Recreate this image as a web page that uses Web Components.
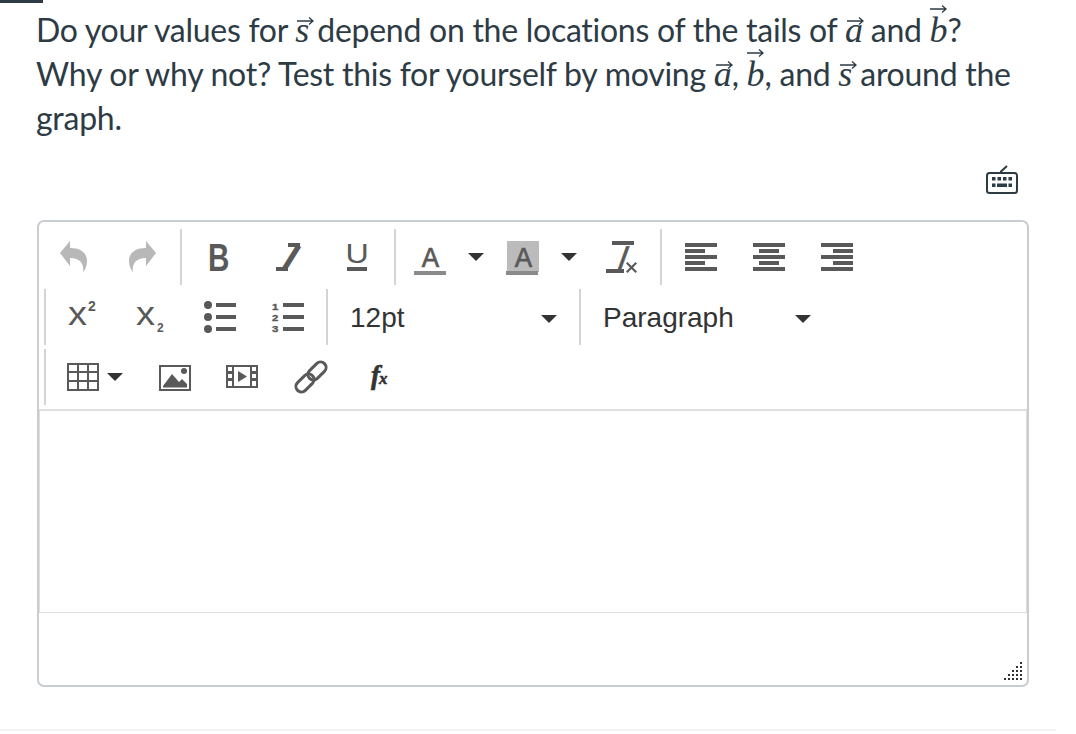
<!DOCTYPE html>
<html><head><meta charset="utf-8">
<style>
html,body{margin:0;padding:0;background:#fff}
body{width:1076px;height:734px;overflow:hidden;font-family:Lato,sans-serif;color:#2d3b45}
</style></head><body>
<quiz-page>
<question-text>
Do your values for <m-vec>s</m-vec> depend on the locations of the tails of <m-vec>a</m-vec> and <m-vec tall>b</m-vec>?<br>
Why or why not? Test this for yourself by moving <m-vec>a</m-vec>, <m-vec tall>b</m-vec>, and <m-vec>s</m-vec> around the<br>
graph.
</question-text>
<rich-editor></rich-editor>
</quiz-page>
<script>
function def(name,css,html){
  customElements.define(name,class extends HTMLElement{
    connectedCallback(){
      if(this.shadowRoot)return;
      const r=this.attachShadow({mode:'open'});
      r.innerHTML='<style>'+css+'</style>'+(typeof html==='function'?html(this):html);
    }
  });
}
def('quiz-page',`:host{display:block;width:1076px;height:734px}
.top{width:43px;height:3px;background:#2d3b45}
.wrap{padding:5px 0 0 37px;width:992px}
.foot{height:2px;width:1056px;background:#f3f3f3;margin-top:42px}`,
`<div class="top"></div><div class="wrap"><slot></slot></div><div class="foot"></div>`);
def('question-text',`:host{display:block;font:32px/44px Lato,sans-serif;letter-spacing:-.27px;color:#2d3b45;white-space:nowrap;height:140px;margin-left:-1px}`,`<slot></slot>`);
def('m-vec',`:host{display:inline-block;position:relative;font:italic 36px/1 "Liberation Serif",serif;letter-spacing:0;color:#2d3b45}
svg{position:absolute;left:2px;top:4px;width:17px;height:10px}
:host([tall]) svg{top:-8px;left:0}`,
`<slot></slot><svg viewBox="0 0 17 10" fill="none" stroke="#2d3b45" stroke-width="1.3"><path d="M0 5H16M12 1.500L16 5L12 8.500"/></svg>`);

def('tb-sep',`:host{display:block;width:2px;height:56px;background:#d4d4d4;flex:none}`,``);
def('tb-gap',`:host{display:block;width:var(--w,4px);height:56px;flex:none}`,``);
def('tb-btn',`:host{display:flex;align-items:center;justify-content:center;width:var(--w,68px);height:56px;flex:none}
svg{width:32px;height:32px;display:block;overflow:visible}`,
  h=>ICONS[h.getAttribute('i')]||'');
def('tb-caret',`:host{display:flex;align-items:center;justify-content:center;width:var(--w,24px);height:56px;flex:none}
i{display:block;width:0;height:0;border:8px solid transparent;border-top-color:#333;border-bottom:0}`,`<i></i>`);
def('tb-select',`:host{display:flex;align-items:center;height:56px;flex:none;box-sizing:border-box;padding:2px 0 0 22px;font:28px "Liberation Sans",Arial,sans-serif;color:#333;width:var(--w);position:relative}
i{position:absolute;right:var(--r);top:26px;width:0;height:0;border:8px solid transparent;border-top-color:#333;border-bottom:0}`,`<slot></slot><i></i>`);
def('tb-row',`:host{display:flex;align-items:center;height:56px;margin-bottom:4px;padding-left:var(--p,0)}`,`<slot></slot>`);

const G='#595959';
const svg=s=>`<svg viewBox="0 0 32 32" fill="${G}">${s}</svg>`;
const bars=a=>svg(a.map(b=>`<rect x="${b[0]}" y="${b[2]}" width="${b[1]}" height="4"/>`).join(''));
const undo='M2 12L12 0V7C24 7 29 13 29 20C29 25 27 29 25 31C26 25 24 17 12 17V25Z';
const SANS='font-family="Liberation Sans,Arial,sans-serif"';
const digit=(y,d)=>`<text transform="translate(0 ${y}) scale(1.2 1)" font-size="9.500" font-weight="700" stroke="${G}" stroke-width=".35" ${SANS}>${d}</text>`;
const ICONS={
 undo:`<svg viewBox="0 0 32 32" fill="#b8b8b8"><path d="${undo}"/></svg>`,
 redo:`<svg viewBox="0 0 32 32" fill="#b8b8b8"><path transform="translate(32 0) scale(-1 1)" d="${undo}"/></svg>`,
 b:svg(`<text transform="translate(3 30) scale(.76 1)" font-size="39" font-weight="700" ${SANS}>B</text>`),
 i:svg(`<rect x="15" y="2" width="12" height="4"/><rect x="3" y="26" width="12" height="4"/><text transform="translate(6 29) skewX(-32)" font-size="33" font-weight="700" stroke="${G}" stroke-width="1.300" ${SANS}>I</text>`),
 u:svg(`<text transform="translate(4.500 22) scale(1.15 1)" font-size="28" ${SANS}>U</text><rect x="6" y="26" width="20" height="4"/>`),
 fore:svg(`<text x="7" y="26" font-size="28" stroke="${G}" stroke-width=".7" transform="translate(1.200 0) scale(.93 1)" ${SANS}>A</text><rect x="0" y="30" width="32" height="4" fill="#8a8a8a"/>`),
 back:`<svg viewBox="0 0 32 32"><rect width="32" height="31" fill="#bbb"/><text x="7" y="26" font-size="28" fill="${G}" stroke="${G}" stroke-width=".7" transform="translate(1.200 0) scale(.93 1)" ${SANS}>A</text><rect x="-1" y="30" width="32" height="4" fill="#8a8a8a"/></svg>`,
 clear:svg(`<rect x="7" y="0" width="22" height="4"/><text transform="translate(10 28) skewX(-20)" font-size="33" stroke="${G}" stroke-width=".5" ${SANS}>I</text><rect x="1" y="28" width="18" height="4"/><path d="M21 22.500l1.500-1.500 4 4 4-4 1.500 1.500-4 4 4 4-1.500 1.500-4-4-4 4-1.500-1.500 4-4z"/>`),
 left:bars([[0,32,2],[0,20,8],[0,32,14],[0,20,20],[0,32,26]]),
 center:bars([[0,32,2],[6,20,8],[0,32,14],[6,20,20],[0,32,26]]),
 right:bars([[0,32,2],[12,20,8],[0,32,14],[12,20,20],[0,32,26]]),
 sup:svg(`<text transform="translate(4 24) scale(1.15 1)" font-size="33" ${SANS}>x</text><text x="24" y="10" font-size="14" font-weight="700" ${SANS}>2</text>`),
 sub:svg(`<text transform="translate(4 24) scale(1.15 1)" font-size="33" ${SANS}>x</text><text x="25" y="31" font-size="12" font-weight="700" ${SANS}>2</text>`),
 bull:svg(`<circle cx="4" cy="4" r="4"/><circle cx="4" cy="16" r="4"/><circle cx="4" cy="28" r="4"/><rect x="12" y="2" width="20" height="4"/><rect x="12" y="14" width="20" height="4"/><rect x="12" y="26" width="20" height="4"/>`),
 num:svg(digit(9,'1')+digit(20,'2')+digit(31,'3')+`<rect x="11" y="2" width="21" height="4"/><rect x="11" y="14" width="21" height="4"/><rect x="11" y="26" width="21" height="4"/>`),
 table:svg(`<path fill-rule="evenodd" d="M0 2H32V30H0ZM2 4V10H10V4ZM12 4V10H20V4ZM22 4V10H30V4ZM2 12V19H10V12ZM12 12V19H20V12ZM22 12V19H30V12ZM2 21V28H10V21ZM12 21V28H20V21ZM22 21V28H30V21Z"/>`),
 image:svg(`<path fill-rule="evenodd" d="M0 4H32V30H0ZM2 6V28H30V6Z"/><path d="M4 26.500V25L13 13L20 21L23 18L28 23V26.500Z"/><circle cx="25" cy="10" r="3"/>`),
 media:svg(`<path fill-rule="evenodd" d="M0 4H32V27H0ZM2 6V10H6V6ZM2 13V17H6V13ZM2 20V25H6V20ZM8 6V25H24V6ZM26 6V10H30V6ZM26 13V17H30V13ZM26 20V25H30V20Z"/><path d="M12 10L21 15.500L12 21Z"/>`),
 link:`<svg viewBox="0 0 32 32" fill="none" stroke="${G}" stroke-width="3"><g transform="rotate(-45 16 16)"><rect x="-3" y="10.500" width="21" height="11" rx="5.500"/><rect x="14" y="10.500" width="21" height="11" rx="5.500"/></g></svg>`,
 fx:`<svg viewBox="0 0 32 32" fill="#333" stroke="#333" stroke-width=".6"><text x="9" y="23" font-size="27" font-weight="700" font-style="italic" font-family="Liberation Serif,serif">f</text><text x="17" y="23" font-size="17" font-weight="700" font-style="italic" font-family="Liberation Serif,serif">x</text></svg>`
};
def('rich-editor',`:host{display:block;width:992px}
.kb{display:flex;justify-content:flex-end;height:46px;padding-right:11px;align-items:flex-end;margin-bottom:26px}
.kb svg{width:32px;height:30px;display:block}
.box{position:relative;box-sizing:border-box;height:467px;border:2px solid #c7cdd1;border-radius:7px;padding-top:7px;background:#fff}
.tools{height:180px}
.area{height:201px;border:1px solid #dedede;border-top-width:2px;background:#fff}
.grip{position:absolute;right:5px;bottom:5px;width:20px;height:20px;display:block}
`,()=>{
 const dots=[];for(let r=0;r<5;r++)for(let c=4-r;c<5;c++){dots.push(`<rect x="${2+c*4}" y="${2+r*4}" width="2" height="2"/>`)}
 return `<div class="kb"><svg viewBox="0 0 32 30" fill="none" stroke="#2d3b45" stroke-width="2"><rect x="1" y="9" width="30" height="20" rx="2.500"/><path d="M15 9V7.500L21 2" /><g fill="#2d3b45" stroke="none">
 <rect x="6" y="13" width="3.500" height="3.500"/><rect x="11.500" y="13" width="3.500" height="3.500"/><rect x="17" y="13" width="3.500" height="3.500"/><rect x="22.500" y="13" width="3.500" height="3.500"/>
 <rect x="6" y="19.500" width="3.500" height="3.500"/><rect x="11" y="19.500" width="10" height="3.500"/><rect x="22.500" y="19.500" width="3.500" height="3.500"/></g></svg></div>
 <div class="box"><div class="tools">
 <tb-row style="--p:1px">
  <tb-btn i="undo"></tb-btn><tb-btn i="redo"></tb-btn><tb-gap style="--w:4px"></tb-gap><tb-sep></tb-sep><tb-gap style="--w:5px"></tb-gap>
  <tb-btn i="b"></tb-btn><tb-btn i="i"></tb-btn><tb-btn i="u"></tb-btn><tb-gap style="--w:3px"></tb-gap><tb-sep></tb-sep>
  <tb-btn i="fore"></tb-btn><tb-caret></tb-caret><tb-btn i="back" style="--w:69px"></tb-btn><tb-caret></tb-caret><tb-btn i="clear" style="--w:79px"></tb-btn><tb-sep></tb-sep><tb-gap style="--w:5px"></tb-gap>
  <tb-btn i="left"></tb-btn><tb-btn i="center"></tb-btn><tb-btn i="right"></tb-btn>
 </tb-row>
 <tb-row style="--p:5px">
  <tb-sep></tb-sep><tb-btn i="sup"></tb-btn><tb-btn i="sub"></tb-btn><tb-gap style="--w:3px"></tb-gap><tb-btn i="bull" style="--w:69px"></tb-btn><tb-btn i="num"></tb-btn><tb-gap></tb-gap><tb-sep></tb-sep>
  <tb-select style="--w:251px;--r:22px">12pt</tb-select><tb-sep></tb-sep>
  <tb-select style="--w:240px;--r:10px">Paragraph</tb-select>
 </tb-row>
 <tb-row style="--p:5px">
  <tb-sep></tb-sep><tb-gap style="--w:21px"></tb-gap><tb-btn i="table" style="--w:32px"></tb-btn><tb-caret style="--w:32px"></tb-caret>
  <tb-btn i="image" style="--w:88px"></tb-btn><tb-btn i="media" style="--w:46px"></tb-btn><tb-btn i="link" style="--w:92px"></tb-btn><tb-btn i="fx" style="--w:42px"></tb-btn>
 </tb-row>
 </div>
 <div class="area"></div>
 <svg class="grip" viewBox="0 0 20 20" fill="#333">${dots.join('')}</svg>
 </div>`;
});
</script>
</body></html>
